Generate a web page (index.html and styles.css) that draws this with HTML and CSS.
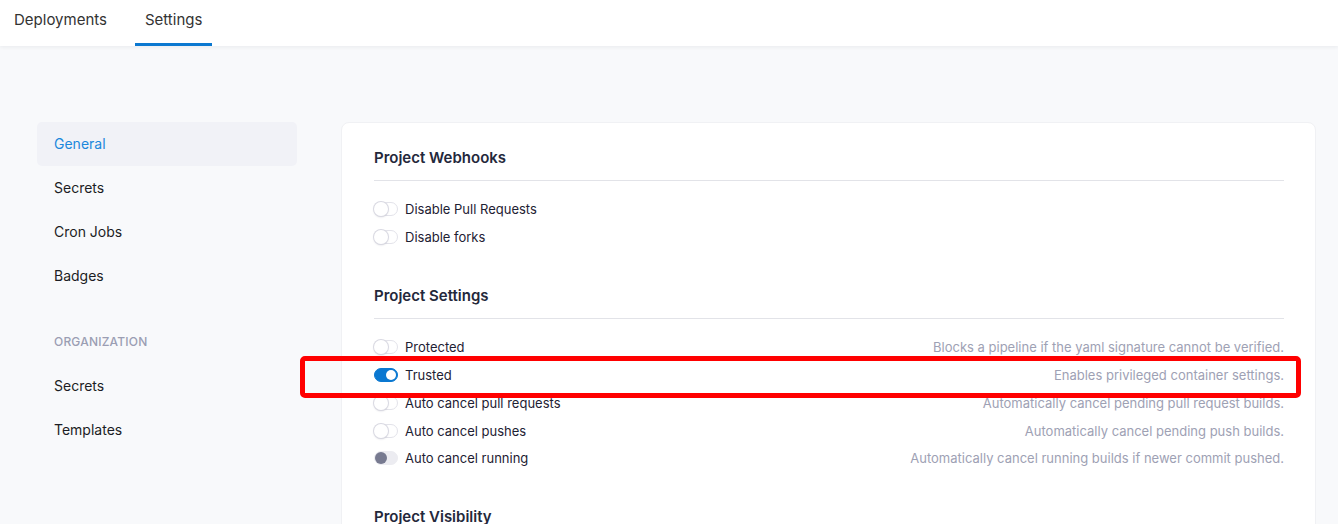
FILE: index.html
```html
<!DOCTYPE html>
<html>
<head>
<meta charset="utf-8">
<link rel="stylesheet" href="styles.css">
</head>
<body>
<header class="topbar">
  <nav class="tabs">
    <a class="tab">Deployments</a>
    <a class="tab active">Settings</a>
  </nav>
</header>
<div class="page">
  <aside class="sidebar">
    <a class="nav-item active">General</a>
    <a class="nav-item">Secrets</a>
    <a class="nav-item">Cron Jobs</a>
    <a class="nav-item">Badges</a>
    <div class="nav-label">ORGANIZATION</div>
    <a class="nav-item">Secrets</a>
    <a class="nav-item">Templates</a>
  </aside>
  <main class="card">
    <section class="section">
      <h2 class="section-title">Project Webhooks</h2>
      <div class="rows">
        <div class="row"><span class="toggle"></span><span class="label">Disable Pull Requests</span></div>
        <div class="row"><span class="toggle"></span><span class="label">Disable forks</span></div>
      </div>
    </section>
    <section class="section">
      <h2 class="section-title">Project Settings</h2>
      <div class="rows">
        <div class="row"><span class="toggle"></span><span class="label">Protected</span><span class="desc">Blocks a pipeline if the yaml signature cannot be verified.</span></div>
        <div class="row"><span class="toggle on"></span><span class="label">Trusted</span><span class="desc">Enables privileged container settings.</span></div>
        <div class="row"><span class="toggle"></span><span class="label">Auto cancel pull requests</span><span class="desc">Automatically cancel pending pull request builds.</span></div>
        <div class="row short"><span class="toggle"></span><span class="label">Auto cancel pushes</span><span class="desc">Automatically cancel pending push builds.</span></div>
        <div class="row"><span class="toggle disabled"></span><span class="label">Auto cancel running</span><span class="desc">Automatically cancel running builds if newer commit pushed.</span></div>
      </div>
    </section>
    <section class="section">
      <h2 class="section-title">Project Visibility</h2>
    </section>
  </main>
</div>
<div class="highlight"></div>
</body>
</html>
```
FILE: styles.css
```css
* { box-sizing: border-box; }
html, body { margin: 0; padding: 0; }
body {
  font-family: Inter, "Noto Sans", sans-serif;
  background: #f8f9fb;
  height: 524px;
  overflow: hidden;
  position: relative;
}
.topbar {
  height: 46px;
  background: #fff;
  box-shadow: 0 1px 4px rgba(30, 40, 60, 0.07);
  position: relative;
  z-index: 1;
}
.tabs {
  display: flex;
  gap: 19px;
  padding-left: 5px;
  height: 46px;
}
.tab {
  display: flex;
  align-items: center;
  padding: 0 9px 4px;
  font-size: 15px;
  color: #333;
  border-bottom: 3px solid transparent;
  height: 46px;
}
.tab.active { border-bottom-color: #0b78d0; padding: 0 10px 4px; }
.page {
  display: flex;
  gap: 44px;
  padding: 76px 22px 0 37px;
}
.sidebar {
  width: 260px;
  flex: none;
  display: flex;
  flex-direction: column;
}
.nav-item {
  height: 44px;
  display: flex;
  align-items: center;
  padding: 0 0 1px 17px;
  font-size: 14px;
  color: #1c1d24;
  border-radius: 5px;
}
.nav-item.active {
  background: #f1f2f7;
  color: #1b88dc;
}
.nav-label {
  font-size: 12px;
  line-height: 20px;
  font-weight: 500;
  color: #9b9eb3;
  letter-spacing: 0.2px;
  padding-left: 17px;
  margin: 34px 0 12px;
}
.card {
  flex: 1;
  background: #fff;
  border: 1px solid #f0f1f4;
  border-radius: 8px;
  padding: 25px 31px 40px 32px;
  height: 600px;
}
.section + .section { margin-top: 35px; }
.section-title {
  margin: 0;
  font-size: 15px;
  line-height: 20px;
  font-weight: 600;
  color: #24283b;
  padding-bottom: 12px;
  border-bottom: 1px solid #e2e3e8;
}
.rows { margin-top: 14px; display: flex; flex-direction: column; }
.row {
  height: 28px;
  display: flex;
  align-items: center;
  font-size: 13px;
}
.row.short { height: 27px; }
.toggle {
  width: 24px;
  height: 14px;
  border-radius: 7px;
  background: #fff;
  border: 1px solid #e3e3ea;
  position: relative;
  flex: none;
  margin-right: 7px;
}
.toggle::after {
  content: "";
  position: absolute;
  top: -1px;
  left: -1px;
  width: 14px;
  height: 14px;
  border-radius: 50%;
  background: #fff;
  box-shadow: 0 0 0 1px #d9d9e2, 0 1px 2px rgba(60, 60, 90, 0.25);
}
.toggle.on {
  background: #0a78d1;
  border-color: #0a78d1;
}
.toggle.on::after {
  left: auto;
  right: 1px;
  top: 1px;
  width: 10px;
  height: 10px;
  box-shadow: none;
}
.toggle.disabled {
  background: #ececf1;
  border-color: #ececf1;
}
.toggle.disabled::after {
  background: #777a90;
  box-shadow: none;
  top: 0;
  left: 0;
  width: 12px;
  height: 12px;
}
.label { color: #1e2133; }
.desc {
  margin-left: auto;
  color: #9ea1b4;
}
.highlight {
  position: absolute;
  left: 300px;
  top: 356px;
  width: 1001px;
  height: 42px;
  border: 5px solid #ff0000;
  border-radius: 5px;
  z-index: 2;
}
```
